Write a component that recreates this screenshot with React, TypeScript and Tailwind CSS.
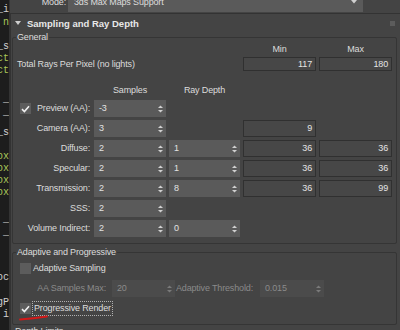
import React from "react";

function Arrows({ dim = false }: { dim?: boolean }) {
  const c = dim ? "#7a7a7a" : "#d0d0d0";
  return (
    <svg width="5" height="8" viewBox="0 0 5 8" className="shrink-0">
      <path d="M0 3 L2.5 0.5 L5 3 Z" fill={c} />
      <path d="M0 5 L2.5 7.5 L5 5 Z" fill={c} />
    </svg>
  );
}

function Spinner({ value, w, dim = false }: { value: string; w: string; dim?: boolean }) {
  return (
    <div
      className={`${w} h-[17px] shrink-0 flex items-center justify-between pl-[5px] pr-[3px] ${
        dim ? "bg-[#4b4b4b] text-[#8a8a8a]" : "bg-[#5a5a5a] text-[#e2e2e2]"
      }`}
    >
      <span>{value}</span>
      <Arrows dim={dim} />
    </div>
  );
}

function RO({ value, h = "h-[17px]" }: { value?: string; h?: string }) {
  return (
    <div className={`w-[73px] ${h} shrink-0 border border-[#303030] bg-[#474747] flex items-center justify-end pr-[3px] text-[#e4e4e4]`}>
      {value}
    </div>
  );
}

function Check({ checked }: { checked: boolean }) {
  return (
    <div className="w-[11px] h-[11px] shrink-0 bg-[#5c5c5c] flex items-center justify-center">
      {checked && (
        <svg width="9" height="8" viewBox="0 0 9 8">
          <path d="M1 4.2 L3.4 6.5 L8 1.2" stroke="#f0f0f0" strokeWidth="1.6" fill="none" />
        </svg>
      )}
    </div>
  );
}

function Row({
  label,
  samples,
  depth,
  min,
  max,
  check,
}: {
  label: string;
  samples: string;
  depth?: string;
  min?: string;
  max?: string;
  check?: boolean;
}) {
  return (
    <div className="flex items-center h-[17px] mt-[3px]">
      <div className="w-[77px] shrink-0 flex items-center justify-between pl-[7px]">
        {check !== undefined ? <Check checked={check} /> : <span />}
        <span className="whitespace-nowrap">{label}</span>
      </div>
      <div className="w-[4px] shrink-0" />
      <Spinner value={samples} w="w-[72px]" />
      <div className="w-[3px] shrink-0" />
      {depth !== undefined ? <Spinner value={depth} w="w-[71px]" /> : <div className="w-[71px] shrink-0" />}
      <div className="w-[3px] shrink-0" />
      {min !== undefined ? <RO value={min} /> : <div className="w-[73px] shrink-0" />}
      <div className="w-[3px] shrink-0" />
      {max !== undefined ? <RO value={max} /> : <div className="w-[73px] shrink-0" />}
    </div>
  );
}

function Code({ t, green, mt }: { t: string; green?: boolean; mt: string }) {
  return (
    <div
      className={`${mt} h-[12px] leading-[12px] w-[9px] overflow-hidden flex justify-end whitespace-nowrap ${
        green ? "text-[#a9c65a]" : "text-[#d0d0d0]"
      }`}
    >
      {t}
    </div>
  );
}

export default function App() {
  return (
    <div className="w-[400px] h-[330px] overflow-hidden flex bg-[#444444] text-[#dcdcdc] text-[9px] tracking-[-0.15px] leading-[11px] font-['Liberation_Sans',Arial,sans-serif]">
      {/* left code strip */}
      <div className="w-[9px] shrink-0 bg-[#1d1d1d] flex flex-col font-['Liberation_Mono',monospace] text-[10px] tracking-normal">
        <Code t="_i" mt="mt-[4px]" />
        <Code t="n" green mt="mt-[1px]" />
        <Code t="_s" mt="mt-[12px]" />
        <Code t="ct" green mt="mt-[0px]" />
        <Code t="ct" green mt="mt-[0px]" />
        <Code t="_" mt="mt-[17px]" />
        <Code t="_" mt="mt-[1px]" />
        <Code t="_s" mt="mt-[8px]" />
        <Code t="ox" green mt="mt-[12px]" />
        <Code t="ox" green mt="mt-[0px]" />
        <Code t="ox" green mt="mt-[0px]" />
        <Code t="ox" green mt="mt-[0px]" />
        <Code t="_" mt="mt-[15px]" />
        <Code t="_" mt="mt-[1px]" />
        <Code t="oc" mt="mt-[33px]" />
        <Code t="gP" mt="mt-[13px]" />
        <Code t="i" mt="mt-[0px]" />
      </div>
      <div className="w-[1px] shrink-0 bg-[#333333]" />

      {/* main panel */}
      <div className="flex-1 flex flex-col min-w-0">
        {/* mode row */}
        <div className="h-[13px] shrink-0 overflow-hidden">
          <div className="flex items-center -mt-[8px] h-[20px]">
            <div className="w-[58px] shrink-0 text-right pr-[2px]">Mode:</div>
            <div className="w-[295px] h-[20px] shrink-0 bg-[#5a5a5a] flex items-center justify-between pl-[6px] pr-[6px]">
              <span>3ds Max Maps Support</span>
              <svg width="6" height="4" viewBox="0 0 6 4">
                <path d="M0 0 L6 0 L3 3.5 Z" fill="#d0d0d0" />
              </svg>
            </div>
          </div>
        </div>

        {/* rollout */}
        <div className="flex-1 border-t border-l border-[#333333] flex flex-col">
          <div className="h-[18px] shrink-0 flex items-center pl-[4px] pr-[5px]">
            <svg width="6" height="5" viewBox="0 0 6 5" className="mr-[6px]">
              <path d="M0 0 L6 0 L3 4 Z" fill="#cfcfcf" />
            </svg>
            <span className="font-bold text-[9.5px] tracking-normal text-[#e8e8e8] flex-1">Sampling and Ray Depth</span>
            <div className="w-[5px] h-[5px] bg-[#5c5c5c]" />
          </div>

          {/* General group */}
          <fieldset className="ml-[1px] mr-[3px] border border-[#353535] rounded-[2px] pb-[6px]">
            <legend className="ml-[3px] px-[1px] leading-[11px]">General</legend>
            <div className="flex mt-[1px] h-[11px] items-center">
              <div className="w-[230px] shrink-0" />
              <div className="w-[73px] text-center">Min</div>
              <div className="w-[3px]" />
              <div className="w-[73px] text-center">Max</div>
            </div>
            <div className="flex items-center mt-[2px]">
              <div className="w-[230px] shrink-0 pl-[4px] whitespace-nowrap">Total Rays Per Pixel (no lights)</div>
              <RO value="117" h="h-[14px]" />
              <div className="w-[3px]" />
              <RO value="180" h="h-[14px]" />
            </div>
            <div className="flex mt-[14px] h-[11px] items-center">
              <div className="w-[81px] shrink-0" />
              <div className="w-[72px] text-center">Samples</div>
              <div className="w-[3px]" />
              <div className="w-[71px] text-center">Ray Depth</div>
            </div>
            <div className="h-[1px]" />
            <Row label="Preview (AA):" samples="-3" check={true} />
            <Row label="Camera (AA):" samples="3" min="9" />
            <Row label="Diffuse:" samples="2" depth="1" min="36" max="36" />
            <Row label="Specular:" samples="2" depth="1" min="36" max="36" />
            <Row label="Transmission:" samples="2" depth="8" min="36" max="99" />
            <Row label="SSS:" samples="2" />
            <Row label="Volume Indirect:" samples="2" depth="0" />
          </fieldset>

          {/* Adaptive and Progressive group */}
          <fieldset className="mt-[3px] ml-[1px] mr-[3px] border border-[#353535] rounded-[2px] pb-[8px]">
            <legend className="ml-[3px] px-[1px] leading-[11px]">Adaptive and Progressive</legend>
            <div className="flex items-center pl-[7px] mt-[4px] h-[12px]">
              <Check checked={false} />
              <span className="ml-[2px]">Adaptive Sampling</span>
            </div>
            <div className="flex items-center mt-[6px] h-[17px] text-[#8a8a8a]">
              <div className="w-[93px] shrink-0 text-right">AA Samples Max:</div>
              <div className="w-[6px] shrink-0" />
              <Spinner value="20" w="w-[63px]" dim />
              <div className="w-[78px] shrink-0 text-right">Adaptive Threshold:</div>
              <div className="w-[7px] shrink-0" />
              <Spinner value="0.015" w="w-[64px]" dim />
            </div>
            <div className="relative flex items-center pl-[7px] mt-[4px] h-[15px]">
              <Check checked={true} />
              <span className="ml-[1px] px-[1px] border border-dotted border-[#b0b0b0] leading-[13px]">Progressive Render</span>
              <svg width="30" height="6" viewBox="0 0 30 6" className="absolute left-[6px] top-[14px]">
                <path d="M1 4.5 C 8 4, 18 3, 28 1.5" stroke="#d41818" strokeWidth="1.8" fill="none" strokeLinecap="round" />
              </svg>
            </div>
          </fieldset>

          <div className="mt-[1px] pl-[4px] leading-[11px]">Depth Limits</div>
        </div>
      </div>
    </div>
  );
}
